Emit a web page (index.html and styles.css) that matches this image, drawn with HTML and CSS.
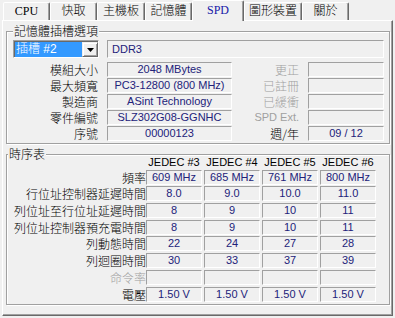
FILE: index.html
```html
<!DOCTYPE html>
<html lang="zh-Hant">
<head>
<meta charset="utf-8">
<title>CPU-Z SPD</title>
<link rel="stylesheet" href="styles.css">
</head>
<body>
<div class="window">
  <div class="tabs">
    <div class="tab t-cpu">CPU</div>
    <div class="tab t-cache">快取</div>
    <div class="tab t-mb">主機板</div>
    <div class="tab t-mem">記憶體</div>
    <div class="tab t-spd active">SPD</div>
    <div class="tab t-gfx">圖形裝置</div>
    <div class="tab t-about">關於</div>
  </div>
  <div class="panel">
    <fieldset class="group slot-group">
      <legend>記憶體插槽選項</legend>
      <div class="slot-grid">
        <div class="combo">
          <span class="combo-value">插槽 #2</span>
          <span class="combo-btn"><svg width="7" height="4" viewBox="0 0 7 4"><path d="M0 0h7L3.5 4z" fill="#000"/></svg></span>
        </div>
        <div class="field wide">DDR3</div>

        <div class="lbl">模組大小</div>
        <div class="field">2048 MBytes</div>
        <div class="lbl dim">更正</div>
        <div class="field"></div>

        <div class="lbl">最大頻寬</div>
        <div class="field">PC3-12800 (800 MHz)</div>
        <div class="lbl dim">已註冊</div>
        <div class="field"></div>

        <div class="lbl">製造商</div>
        <div class="field">ASint Technology</div>
        <div class="lbl dim">已緩衝</div>
        <div class="field"></div>

        <div class="lbl">零件編號</div>
        <div class="field">SLZ302G08-GGNHC</div>
        <div class="lbl dim latin">SPD Ext.</div>
        <div class="field"></div>

        <div class="lbl">序號</div>
        <div class="field">00000123</div>
        <div class="lbl">週/年</div>
        <div class="field">09 / 12</div>
      </div>
    </fieldset>

    <fieldset class="group timing-group">
      <legend>時序表</legend>
      <div class="timing-grid">
        <div></div>
        <div class="hdr">JEDEC #3</div>
        <div class="hdr">JEDEC #4</div>
        <div class="hdr">JEDEC #5</div>
        <div class="hdr">JEDEC #6</div>

        <div class="lbl tl">頻率</div>
        <div class="field">609 MHz</div>
        <div class="field">685 MHz</div>
        <div class="field">761 MHz</div>
        <div class="field">800 MHz</div>

        <div class="lbl tl">行位址控制器延遲時間</div>
        <div class="field">8.0</div>
        <div class="field">9.0</div>
        <div class="field">10.0</div>
        <div class="field">11.0</div>

        <div class="lbl tl">列位址至行位址延遲時間</div>
        <div class="field">8</div>
        <div class="field">9</div>
        <div class="field">10</div>
        <div class="field">11</div>

        <div class="lbl tl">列位址控制器預充電時間</div>
        <div class="field">8</div>
        <div class="field">9</div>
        <div class="field">10</div>
        <div class="field">11</div>

        <div class="lbl tl">列動態時間</div>
        <div class="field">22</div>
        <div class="field">24</div>
        <div class="field">27</div>
        <div class="field">28</div>

        <div class="lbl tl">列迴圈時間</div>
        <div class="field">30</div>
        <div class="field">33</div>
        <div class="field">37</div>
        <div class="field">39</div>

        <div class="lbl tl dim">命令率</div>
        <div class="field"></div>
        <div class="field"></div>
        <div class="field"></div>
        <div class="field"></div>

        <div class="lbl tl">電壓</div>
        <div class="field">1.50 V</div>
        <div class="field">1.50 V</div>
        <div class="field">1.50 V</div>
        <div class="field">1.50 V</div>
      </div>
    </fieldset>
  </div>
</div>
</body>
</html>
```

FILE: styles.css
```css
html, body {
  margin: 0;
  padding: 0;
}

body {
  background: #f0f0f0;
  width: 395px;
  height: 318px;
  overflow: hidden;
  font-family: "Liberation Sans", "Noto Sans CJK TC", sans-serif;
  font-size: 11px;
  color: #000;
}

.window {
  padding: 0 2px;
}

/* ---------- tabs ---------- */
.tabs {
  display: flex;
  align-items: flex-end;
  height: 20px;
  padding-left: 1px;
}

.tab {
  box-sizing: border-box;
  height: 18px;
  border: 1px solid;
  border-bottom: none;
  border-color: #fff #696969 transparent #fff;
  box-shadow: inset -1px 0 0 #a0a0a0;
  border-radius: 2px 2px 0 0;
  font: 300 12px/16px "Liberation Serif", "Noto Sans CJK TC", serif;
  text-align: center;
  background: #f0f0f0;
}

.t-cpu { width: 47px; }
.t-cache { width: 47px; }
.t-mb { width: 48px; }
.t-mem { width: 47px; }
.t-spd { width: 52px; }
.t-gfx { width: 58px; }
.t-about { width: 47px; }

.tab.active {
  height: 21px;
  margin-bottom: -1px;
  line-height: 18px;
  color: #1818a8;
  position: relative;
  z-index: 1;
}

/* ---------- panel ---------- */
.panel {
  box-sizing: border-box;
  height: 296px;
  border: 1px solid;
  border-color: #fff #696969 #696969 #fff;
  box-shadow: inset -1px -1px 0 #a0a0a0;
  padding: 3px 2px 0 3px;
}

.group {
  margin: 0;
  min-width: 0;
  border: 1px solid #a0a0a0;
  box-shadow: inset 1px 1px 0 #fff, 1px 1px 0 #fff;
}

.group legend {
  padding: 0 1px;
  font: 300 12px/14px "Noto Sans CJK TC", sans-serif;
  background: #f0f0f0;
}

.slot-group {
  padding: 2px 5px 2px 6px;
}

.timing-group {
  margin-top: 3px;
  padding: 0 13px 2px 1px;
}

/* ---------- slot section ---------- */
.slot-grid {
  display: grid;
  grid-template-columns: 86px 125px 60px 76px;
  grid-template-rows: 21px repeat(5, 15px);
  column-gap: 8px;
  row-gap: 1px;
}

.combo {
  box-sizing: border-box;
  display: flex;
  height: 18px;
  border: 1px solid;
  border-color: #a0a0a0 #fff #fff #a0a0a0;
  box-shadow: inset 1px 1px 0 #696969;
  padding: 1px 0 0 1px;
  background: #fff;
}

.combo-value {
  flex: 1;
  background: #3399ff;
  color: #fff;
  font: 300 12px/15px "Liberation Sans", "Noto Sans CJK TC", sans-serif;
  padding-left: 1px;
  white-space: nowrap;
}

.combo-btn {
  box-sizing: border-box;
  width: 16px;
  display: flex;
  align-items: center;
  justify-content: center;
  border: 1px solid;
  border-color: #f0f0f0 #696969 #696969 #f0f0f0;
  box-shadow: inset 1px 1px 0 #fff, inset -1px -1px 0 #a0a0a0;
  background: #f0f0f0;
}

.field {
  box-sizing: border-box;
  height: 15px;
  border: 1px solid;
  border-color: #a0a0a0 #fff #fff #a0a0a0;
  color: #22227a;
  font: 11px/13px "Liberation Sans", sans-serif;
  text-align: center;
  white-space: nowrap;
  overflow: hidden;
}

.field.wide {
  grid-column: 2 / 5;
  height: 18px;
  line-height: 16px;
  text-align: left;
  padding-left: 4px;
}

.lbl {
  font: 300 12px/15px "Noto Sans CJK TC", sans-serif;
  text-align: right;
  white-space: nowrap;
  padding-right: 1px;
}

.lbl.latin {
  font: 11px/15px "Liberation Sans", sans-serif;
}

.lbl.dim {
  color: #a0a0a0;
}

/* ---------- timing section ---------- */
.timing-grid {
  display: grid;
  grid-template-columns: 1fr repeat(4, 56px);
  grid-template-rows: 12px repeat(8, 15px);
  column-gap: 2px;
  row-gap: 1.7px;
  margin-top: -5px;
}

.hdr {
  font: 11px/12px "Liberation Sans", sans-serif;
  text-align: center;
  white-space: nowrap;
}

.lbl.tl {
  padding-right: 0;
  margin-right: -2px;
}
```
